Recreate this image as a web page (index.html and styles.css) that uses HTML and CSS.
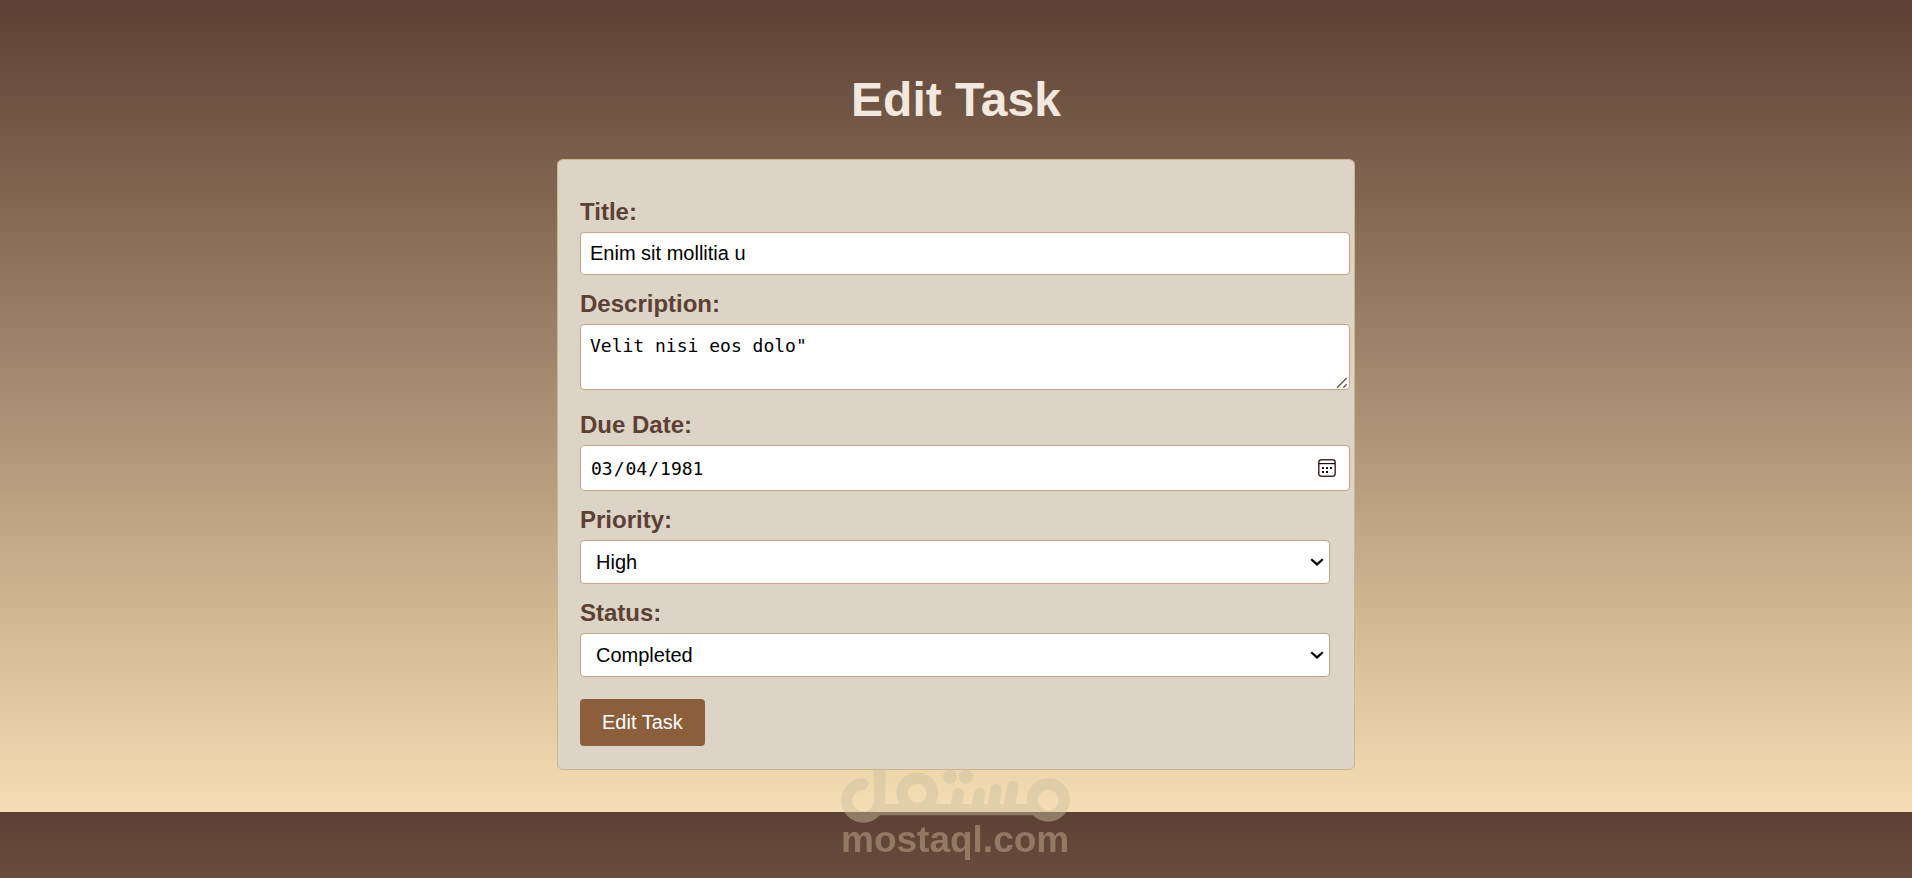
FILE: index.html
```html
<!DOCTYPE html>
<html lang="en">
<head>
<meta charset="utf-8">
<title>Edit Task</title>
<link rel="stylesheet" href="styles.css">
</head>
<body>
<main class="page">
  <h1 class="page-title">Edit Task</h1>
  <form class="task-form">
    <label class="label" for="title">Title:</label>
    <div class="field field-wide">
      <input class="control title-input" type="text" id="title" value="Enim sit mollitia u">
    </div>

    <label class="label" for="description">Description:</label>
    <div class="field field-wide field-spaced">
      <textarea class="control description-input" id="description">Velit nisi eos dolo"</textarea>
      <svg class="grip" viewBox="0 0 12 12" aria-hidden="true">
        <path d="M1 10.7L10.7 1M7.3 10.7L10.7 7.3"/>
      </svg>
    </div>

    <label class="label" for="due-date">Due Date:</label>
    <div class="field field-wide">
      <input class="control date-input" type="date" id="due-date" value="1981-03-04">
      <svg class="calendar" viewBox="0 0 18 18" aria-hidden="true">
        <rect class="calendar-frame" x="0.8" y="0.8" width="16.4" height="16.4" rx="2.6"/>
        <path class="calendar-head" d="M1 4.6H17"/>
        <path class="calendar-days" d="M4 8h2v2H4zM8 8h2v2H8zM12 8h2v2h-2zM4 12h2v2H4zM8 12h2v2H8z"/>
      </svg>
    </div>

    <label class="label" for="priority">Priority:</label>
    <div class="field">
      <select class="control select" id="priority">
        <option>Low</option>
        <option>Medium</option>
        <option selected>High</option>
      </select>
      <svg class="chevron" viewBox="0 0 14 8" aria-hidden="true"><path d="M1.2 1.2L7 6.4L12.8 1.2"/></svg>
    </div>

    <label class="label" for="status">Status:</label>
    <div class="field">
      <select class="control select" id="status">
        <option>Pending</option>
        <option selected>Completed</option>
      </select>
      <svg class="chevron" viewBox="0 0 14 8" aria-hidden="true"><path d="M1.2 1.2L7 6.4L12.8 1.2"/></svg>
    </div>

    <button class="submit" type="submit">Edit Task</button>
  </form>
</main>

<svg class="watermark" viewBox="0 0 230 108" aria-hidden="true">
  <g class="mark">
    <path d="M22 14A16.5 16.5 0 1 0 38.7 30V0"/>
    <circle class="dot" cx="22" cy="14" r="5.6"/>
    <path d="M36 39.7H196"/>
    <circle cx="76.3" cy="23.3" r="15.2"/>
    <path stroke-linecap="round" d="M117.3 23.5L115 38M138.7 23.5L136 38M155 19.5L152 38M171.8 16.5L168 38"/>
    <circle cx="207.3" cy="30" r="16"/>
    <circle class="dot" cx="109" cy="6.7" r="7"/>
    <circle class="dot" cx="125" cy="6.7" r="7"/>
  </g>
  <text class="mark-text" x="0" y="82">mostaql.com</text>
</svg>
</body>
</html>
```
FILE: styles.css
```css
* {
  box-sizing: border-box;
}

body {
  margin: 0;
  font-family: "Liberation Sans", Arial, sans-serif;
  background: linear-gradient(to bottom, #5c4033, #f5deb3);
}

.page {
  padding: 72px 22px 42px;
}

.page-title {
  margin: 0 0 31px;
  font-size: 48px;
  line-height: 56px;
  text-align: center;
  color: #f2e8df;
}

.task-form {
  max-width: 798px;
  margin: 0 auto;
  padding: 23px 24px 23px 22px;
  border: 1px solid #d2b48c;
  border-radius: 6px;
  background: #dcd4c6;
}

.label {
  display: block;
  margin: 15px 0 6px;
  font-size: 24px;
  font-weight: bold;
  line-height: 28px;
  color: #5c4033;
}

.field {
  position: relative;
}

/* Text fields reach past the right padding of the form. */
.field-wide {
  width: calc(100% + 20px);
}

.field-spaced {
  margin-bottom: 21px;
}

.control {
  display: block;
  width: 100%;
  margin: 0;
  padding: 9px;
  border: 1px solid #c4a484;
  border-radius: 4px;
  background: #fff;
  color: #000;
  font-family: inherit;
  font-size: 20px;
}

.title-input {
  height: 43px;
}

.description-input {
  height: 66px;
  line-height: 24px;
  font-family: "DejaVu Sans Mono", monospace;
  font-size: 18px;
}

.description-input::-webkit-resizer {
  background: transparent;
}

.date-input {
  height: 46px;
  font-family: "DejaVu Sans Mono", monospace;
  font-size: 18px;
}

.date-input::-webkit-calendar-picker-indicator {
  opacity: 0;
}

.select {
  height: 44px;
  padding: 0 28px 0 15px;
  appearance: none;
}

.grip,
.calendar,
.chevron {
  position: absolute;
  fill: none;
  pointer-events: none;
}

.grip {
  right: 2px;
  bottom: 1px;
  width: 12px;
  height: 12px;
  stroke: #6b5040;
  stroke-width: 1.3;
}

.calendar {
  top: 14px;
  right: 14px;
  width: 18px;
  height: 18px;
}

.calendar-frame {
  stroke: #4a3028;
  stroke-width: 1.5;
}

.calendar-head {
  stroke: #1a0e14;
  stroke-width: 1.2;
}

.calendar-days {
  fill: #1a0e14;
}

.chevron {
  top: 18px;
  right: 6px;
  width: 14px;
  height: 8px;
  stroke: #000;
  stroke-width: 2.2;
}

.submit {
  display: block;
  height: 47px;
  margin-top: 22px;
  padding: 0 22px;
  border: 0;
  border-radius: 4px;
  background: #8b5e3c;
  color: #fff;
  font-family: inherit;
  font-size: 20px;
}

.watermark {
  position: fixed;
  bottom: 0;
  left: calc(50% - 115px);
  width: 230px;
  height: 108px;
  opacity: 0.46;
  pointer-events: none;
}

.mark {
  fill: none;
  stroke: #ccbf9f;
  stroke-width: 11.3;
}

.dot {
  fill: #ccbf9f;
  stroke: none;
}

.mark-text {
  font-family: "Liberation Sans", Arial, sans-serif;
  font-size: 37px;
  font-weight: bold;
  fill: #ccb896;
}
```
